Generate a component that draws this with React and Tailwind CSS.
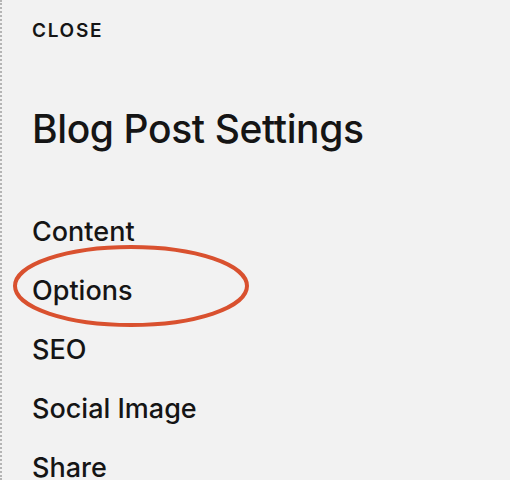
export default function App() {
  const items = ["Content", "Options", "SEO", "Social Image", "Share"];
  return (
    <div className="relative h-[480px] w-[510px] overflow-hidden border-l-2 border-dotted border-[#b5b5b5] bg-[#f2f2f2] font-['Inter',sans-serif] text-[#151515]">
      <div className="pl-[30px] pt-[21px]">
        <div className="text-[19px] font-semibold leading-[20px] tracking-[0.09em]">CLOSE</div>
        <h1 className="mt-[64px] text-[39px] font-medium leading-[48px] tracking-[-0.01em]">
          Blog Post Settings
        </h1>
        <ul className="mt-[49px] flex flex-col">
          {items.map((item) => (
            <li key={item} className="text-[27px] font-medium leading-[59px]">
              {item}
            </li>
          ))}
        </ul>
      </div>
      <svg className="absolute left-0 top-0" width="510" height="480">
        <ellipse cx="129" cy="286" rx="116" ry="39" fill="none" stroke="#d9512f" strokeWidth="4" />
      </svg>
    </div>
  );
}
